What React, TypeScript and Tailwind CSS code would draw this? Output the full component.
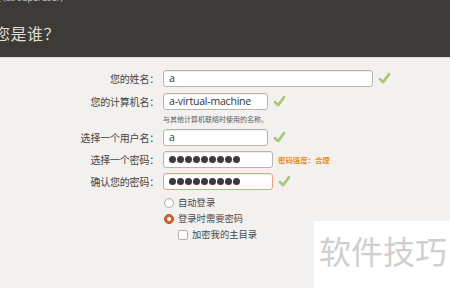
import React from 'react';

const cjk = { fontFamily: '"Noto Sans CJK SC", "Noto Sans", sans-serif' };
const latin = { fontFamily: '"Open Sans", "Liberation Sans", "Noto Sans CJK SC", sans-serif' };

const Check = () => (
  <svg width="13" height="13" viewBox="0 0 13 13" className="shrink-0">
    <path d="M2 7.2 L5 10.2 L11 2.2" fill="none" stroke="#9cbf63" strokeWidth="2.6" strokeLinecap="round" strokeLinejoin="round" />
    <path d="M2 7.2 L5 10.2 L11 2.2" fill="none" stroke="#b9d786" strokeWidth="1" strokeLinecap="round" strokeLinejoin="round" />
  </svg>
);

const Dots = () => (
  <div className="flex items-center gap-[1px]">
    {Array.from({ length: 9 }).map((_, i) => (
      <span key={i} className="w-[7px] h-[7px] rounded-full bg-[#3a3a3a]" />
    ))}
  </div>
);

const Row = ({ label, width, children, after, orange }: { label: string; width: number; children: React.ReactNode; after?: React.ReactNode; orange?: boolean }) => (
  <div className="flex items-center h-[17px]">
    <div className="w-[159px] text-right text-[10px] text-[#45453f] tracking-[-0.2px]" style={cjk}>{label}</div>
    <div
      className={`ml-[4px] h-[17px] rounded-[3px] border bg-white flex items-center pl-[5px] shadow-[inset_0_1px_1px_rgba(0,0,0,0.08)] ${orange ? 'border-[#e7a584]' : 'border-[#b9b4ae]'}`}
      style={{ width }}
    >
      {children}
    </div>
    <div className="ml-[5px] flex items-center">{after}</div>
  </div>
);

export default function App() {
  return (
    <div className="w-[450px] h-[288px] overflow-hidden bg-[#f2f1f0] relative">
      <div className="h-[57px] bg-[#3c3b37] relative overflow-hidden">
        <div className="absolute left-[-8px] top-[-9px] text-[9px] text-[#cfccc4]" style={latin}>装 (as superuser)</div>
        <div className="absolute left-[-6px] top-[23px] text-[16px] leading-[20px] text-[#e0ddd5] tracking-[0.5px]" style={cjk}>您是谁？</div>
      </div>
      <div className="h-[1px] bg-[#dcdad6]" />
      <div className="pt-[12px] flex flex-col">
        <Row label="您的姓名：" width={210} after={<Check />}>
          <span className="text-[10.5px] text-[#333]" style={latin}>a</span>
        </Row>
        <div className="mt-[6px]">
          <Row label="您的计算机名：" width={105} after={<Check />}>
            <span className="text-[10.5px] text-[#333] tracking-[-0.2px]" style={latin}>a-virtual-machine</span>
          </Row>
        </div>
        <div className="ml-[163px] mt-[3px] h-[13px] flex items-center text-[7px] text-[#5a5a56]" style={cjk}>与其他计算机联络时使用的名称。</div>
        <div className="mt-[3px]">
          <Row label="选择一个用户名：" width={105} after={<Check />}>
            <span className="text-[10.5px] text-[#333]" style={latin}>a</span>
          </Row>
        </div>
        <div className="mt-[5px]">
          <Row label="选择一个密码：" width={110} after={<span className="text-[7.4px] text-[#ef8c25] font-bold" style={cjk}>密码强度：合理</span>}>
            <Dots />
          </Row>
        </div>
        <div className="mt-[5px]">
          <Row label="确认您的密码：" width={110} orange after={<Check />}>
            <Dots />
          </Row>
        </div>
        <div className="ml-[164px] mt-[7px] flex flex-col gap-[5px] text-[9.3px] text-[#4a4a46]" style={cjk}>
          <div className="flex items-center h-[11px]">
            <span className="w-[10px] h-[10px] rounded-full border border-[#b3aea8] bg-white shadow-[inset_0_1px_1px_rgba(0,0,0,0.08)]" />
            <span className="ml-[4px]">自动登录</span>
          </div>
          <div className="flex items-center h-[11px]">
            <span className="w-[10px] h-[10px] rounded-full bg-[#d4612c] border border-[#b9501f] flex items-center justify-center">
              <span className="w-[4px] h-[4px] rounded-full bg-white" />
            </span>
            <span className="ml-[4px]">登录时需要密码</span>
          </div>
          <div className="flex items-center h-[11px] ml-[14px]">
            <span className="w-[10px] h-[10px] rounded-[2px] border border-[#b3aea8] bg-white" />
            <span className="ml-[4px]">加密我的主目录</span>
          </div>
        </div>
      </div>
      <div className="absolute left-[314px] top-[221px] w-[136px] h-[67px] bg-white flex items-start pl-[5px] pt-[13px]">
        <span className="text-[32px] leading-[32px] text-[#cfcfcf]" style={cjk}>软件技巧</span>
      </div>
    </div>
  );
}
